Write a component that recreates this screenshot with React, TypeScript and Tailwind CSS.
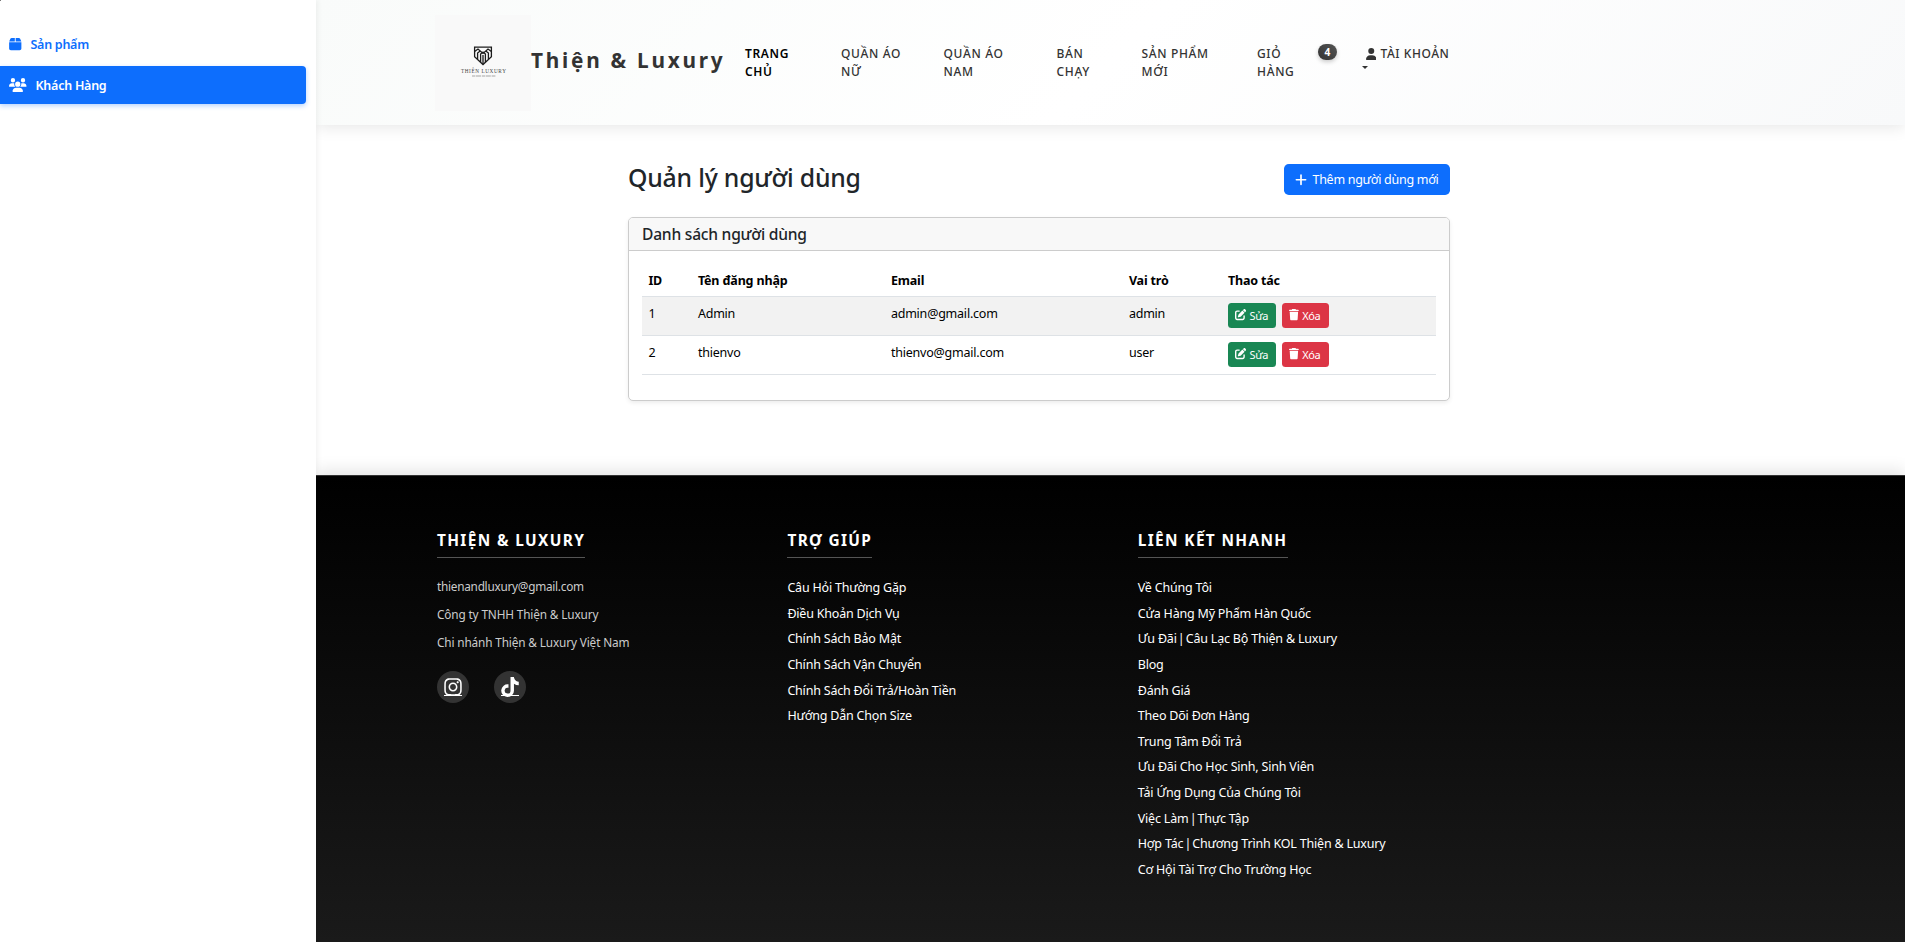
import type { ReactNode } from 'react';
import { FaBox, FaUsers, FaUser, FaPlus, FaPenToSquare, FaTrash, FaInstagram, FaTiktok } from 'react-icons/fa6';

const navItems = [
  { lines: ['TRANG', 'CHỦ'], width: 'w-[96px]', active: true },
  { lines: ['QUẦN ÁO', 'NỮ'], width: 'w-[102.5px]' },
  { lines: ['QUẦN ÁO', 'NAM'], width: 'w-[113px]' },
  { lines: ['BÁN', 'CHẠY'], width: 'w-[85px]' },
  { lines: ['SẢN PHẨM', 'MỚI'], width: 'w-[115.5px]' },
  { lines: ['GIỎ', 'HÀNG'], width: 'w-[61px]' },
];

const users = [
  { id: 1, name: 'Admin', email: 'admin@gmail.com', role: 'admin' },
  { id: 2, name: 'thienvo', email: 'thienvo@gmail.com', role: 'user' },
];

const helpLinks = [
  'Câu Hỏi Thường Gặp',
  'Điều Khoản Dịch Vụ',
  'Chính Sách Bảo Mật',
  'Chính Sách Vận Chuyển',
  'Chính Sách Đổi Trả/Hoàn Tiền',
  'Hướng Dẫn Chọn Size',
];

const quickLinks = [
  'Về Chúng Tôi',
  'Cửa Hàng Mỹ Phẩm Hàn Quốc',
  'Ưu Đãi | Câu Lạc Bộ Thiện & Luxury',
  'Blog',
  'Đánh Giá',
  'Theo Dõi Đơn Hàng',
  'Trung Tâm Đổi Trả',
  'Ưu Đãi Cho Học Sinh, Sinh Viên',
  'Tải Ứng Dụng Của Chúng Tôi',
  'Việc Làm | Thực Tập',
  'Hợp Tác | Chương Trình KOL Thiện & Luxury',
  'Cơ Hội Tài Trợ Cho Trường Học',
];

function Logo() {
  return (
    <svg viewBox="0 0 96 96" className="h-24 w-24 shrink-0 bg-[#f9f9f9]">
      <g fill="none" stroke="#1c1c1c" strokeWidth="1.3">
        <path d="M39.6 32.2h16.8v9.6L48 49.6l-8.4-7.8z" />
        <path d="M39.6 36.5l3.4-2.5 5 4.4 5-4.4 3.4 2.5" />
        <path d="M42.6 44V38l2.6-2M53.4 44V38l-2.6-2" />
        <path d="M45.6 47v-8l2.4-2 2.4 2v8M48 40v9" />
      </g>
      <text
        x="48.4"
        y="57.6"
        textAnchor="middle"
        textLength="45"
        fontSize="5.2"
        fill="#444"
        fontFamily="'Liberation Serif', serif"
      >
        THIÊN LUXURY
      </text>
      <path d="M37 61h24" stroke="#a5a5a5" strokeWidth="1.2" strokeDasharray="3.4 .6 5 .8" />
    </svg>
  );
}

function Sidebar() {
  return (
    <aside className="relative z-20 w-[316px] shrink-0 bg-white pt-[25px] text-[12.5px] shadow-[2px_0_5px_rgba(0,0,0,0.05)]">
      <span className="absolute top-0 left-0 h-px w-px bg-[#777]" />
      <a className="flex h-[38px] items-center pl-[9px] font-semibold tracking-[-0.27px] text-[#0d6efd]">
        <FaBox className="mr-[9px] h-[14px] w-[12.5px]" />
        <span className="pt-[2px]">Sản phẩm</span>
      </a>
      <a className="mt-[3px] flex h-[38px] w-[306px] items-center rounded-r-[4px] bg-[#0d6efd] pl-[9px] font-semibold tracking-[-0.25px] text-white shadow-[0_2px_5px_rgba(13,110,253,0.3)]">
        <FaUsers className="mr-[9px] h-[14px] w-[17.5px]" />
        <span className="pt-[2px]">Khách Hàng</span>
      </a>
    </aside>
  );
}

function Header() {
  return (
    <header className="relative z-10 flex h-[125px] shrink-0 items-center bg-linear-[135deg] from-[#f9fbfa] via-white to-[#f8f9fa] pl-[119px] shadow-[0_2px_15px_rgba(0,0,0,0.1)]">
      <Logo />
      <span className="w-[214px] pb-[4px] text-[20.8px] leading-[31px] font-bold tracking-[2.75px] whitespace-nowrap text-[#333]">
        Thiện &amp; Luxury
      </span>
      <nav className="flex text-[12px] leading-[18px] font-medium tracking-[0.65px] text-[#333]">
        {navItems.map((item) => (
          <a key={item.lines.join(' ')} className={item.width}>
            {item.lines.map((line) => (
              <span key={line} className={item.active ? 'block font-semibold text-black' : 'block'}>
                {line}
              </span>
            ))}
          </a>
        ))}
        <span className="-mt-px flex h-4 w-[19px] items-center justify-center rounded-full bg-linear-45 from-[#333] to-[#555] text-[10.2px] font-bold tracking-normal text-white shadow-[0_2px_4px_rgba(0,0,0,0.2)]">
          4
        </span>
        <a className="ml-[25px] flex flex-col">
          <span className="flex h-[18px] items-center pl-[3.5px] tracking-[0.55px] whitespace-nowrap">
            <FaUser className="mr-[4.5px] h-3 w-[10.5px]" />
            TÀI KHOẢN
          </span>
          <span className="mt-[3px] h-0 w-0 border-x-[3.5px] border-t-[3.5px] border-x-transparent border-t-[#333]" />
        </a>
      </nav>
    </header>
  );
}

function ActionButton({ color, children }: { color: string; children: ReactNode }) {
  return (
    <button
      className={`flex h-[25px] items-center gap-[3.5px] rounded-[3.5px] pl-[7px] text-[11px] tracking-[-0.35px] text-white ${color}`}
    >
      {children}
    </button>
  );
}

function UserTable() {
  return (
    <table className="w-full table-fixed text-left text-[12.5px] tracking-[-0.22px] text-black">
      <colgroup>
        <col className="w-[49.5px]" />
        <col className="w-[193px]" />
        <col className="w-[238px]" />
        <col className="w-[99px]" />
        <col />
      </colgroup>
      <thead>
        <tr className="h-[32px] border-b border-[#dee2e6] font-bold tracking-[-0.16px]">
          {['ID', 'Tên đăng nhập', 'Email', 'Vai trò', 'Thao tác'].map((title) => (
            <th key={title} className="px-[6.4px] pt-[3px]">
              {title}
            </th>
          ))}
        </tr>
      </thead>
      <tbody>
        {users.map((user) => (
          <tr key={user.id} className="h-[39px] border-b border-[#dee2e6] align-top leading-[19px] odd:bg-[#f2f2f2]">
            <td className="px-[6.4px] pt-[7px]">{user.id}</td>
            <td className="px-[6.4px] pt-[7px]">{user.name}</td>
            <td className="px-[6.4px] pt-[7px]">{user.email}</td>
            <td className="px-[6.4px] pt-[7px]">{user.role}</td>
            <td className="px-[6.4px] pt-[6px]">
              <div className="flex gap-[6px]">
                <ActionButton color="w-12 bg-[#198754]">
                  <FaPenToSquare className="h-[11.2px] w-[11.2px]" />
                  Sửa
                </ActionButton>
                <ActionButton color="w-[47px] bg-[#dc3545]">
                  <FaTrash className="h-[11.2px] w-[9.8px]" />
                  Xóa
                </ActionButton>
              </div>
            </td>
          </tr>
        ))}
      </tbody>
    </table>
  );
}

function LinkText({ text }: { text: string }) {
  const [before, after] = text.split(' | ');
  if (!after) return <>{text}</>;
  return (
    <>
      {before} <span className="mx-[-1.9px]">|</span> {after}
    </>
  );
}

function FooterColumn({ title, children }: { title: string; children: ReactNode }) {
  return (
    <div className="flex w-[350.4px] flex-col items-start">
      <h5 className="h-[30px] border-b border-[#555] pt-px text-[15.4px] leading-[23px] font-bold tracking-[1.36px] whitespace-nowrap text-white">
        {title}
      </h5>
      {children}
    </div>
  );
}

function LinkList({ links }: { links: string[] }) {
  return (
    <ul className="mt-[17.3px] text-[12.5px] leading-[25.6px] tracking-[-0.2px] whitespace-nowrap text-white">
      {links.map((link) => (
        <li key={link}>
          <LinkText text={link} />
        </li>
      ))}
    </ul>
  );
}

function Footer() {
  return (
    <footer className="relative z-30 flex flex-1 border-t border-[#333] bg-linear-to-b/srgb from-black to-[#1a1a1a] pt-[52px] pl-[121px] shadow-[0_-5px_15px_rgba(0,0,0,0.1)] [clip-path:inset(-20px_0_0_0)]">
      <FooterColumn title="THIỆN & LUXURY">
        <div className="mt-[14px] text-[11.8px] leading-7 tracking-[-0.14px] text-[#ccc]">
          <p className="tracking-[-0.26px]">thienandluxury@gmail.com</p>
          <p>Công ty TNHH Thiện &amp; Luxury</p>
          <p>Chi nhánh Thiện &amp; Luxury Việt Nam</p>
        </div>
        <div className="mt-[15px] flex gap-[25px] text-white">
          <a className="flex h-8 w-8 flex-col items-center rounded-full bg-[#333] pt-[6px]">
            <FaInstagram className="h-[20px] w-[20px]" />
            <span className="-mt-[2px] h-px w-[18px] bg-white" />
          </a>
          <a className="flex h-8 w-8 flex-col items-center rounded-full bg-[#333] pt-[6px]">
            <FaTiktok className="h-[20px] w-[18px]" />
            <span className="-mt-[2px] h-px w-[18px] bg-white" />
          </a>
        </div>
      </FooterColumn>
      <FooterColumn title="TRỢ GIÚP">
        <LinkList links={helpLinks} />
      </FooterColumn>
      <FooterColumn title="LIÊN KẾT NHANH">
        <LinkList links={quickLinks} />
      </FooterColumn>
    </footer>
  );
}

export default function App() {
  return (
    <div className="flex h-[942px] w-full overflow-hidden bg-white font-['Noto_Sans','Open_Sans',sans-serif]">
      <Sidebar />
      <div className="flex min-w-0 flex-1 flex-col">
        <Header />
        <main className="ml-[312px] h-[350px] w-[822px] shrink-0 pt-[39px]">
          <div className="flex h-[31px] items-center justify-between">
            <h2 className="pb-[4px] text-[24.8px] leading-[31px] font-medium tracking-[-0.2px] text-[#212529]">
              Quản lý người dùng
            </h2>
            <button className="flex h-[31px] w-[166px] items-center rounded-[4.8px] bg-[#0d6efd] pl-[10.5px] text-[12.5px] tracking-[-0.28px] whitespace-nowrap text-white">
              <FaPlus className="mr-[6px] h-[13.5px] w-[12px]" />
              <span className="pt-[2px]">Thêm người dùng mới</span>
            </button>
          </div>
          <section className="mt-[22px] h-[184px] rounded-[5px] border border-[#ccc] bg-white shadow-[0_2px_4px_rgba(0,0,0,0.075)]">
            <h5 className="flex h-[33px] items-center rounded-t-[4px] border-b border-[#ccc] bg-[#f8f8f8] pt-[2px] pl-[13px] text-[15.6px] font-medium tracking-[-0.23px] text-[#212529]">
              Danh sách người dùng
            </h5>
            <div className="px-[13px] pt-[13px]">
              <UserTable />
            </div>
          </section>
        </main>
        <Footer />
      </div>
    </div>
  );
}
